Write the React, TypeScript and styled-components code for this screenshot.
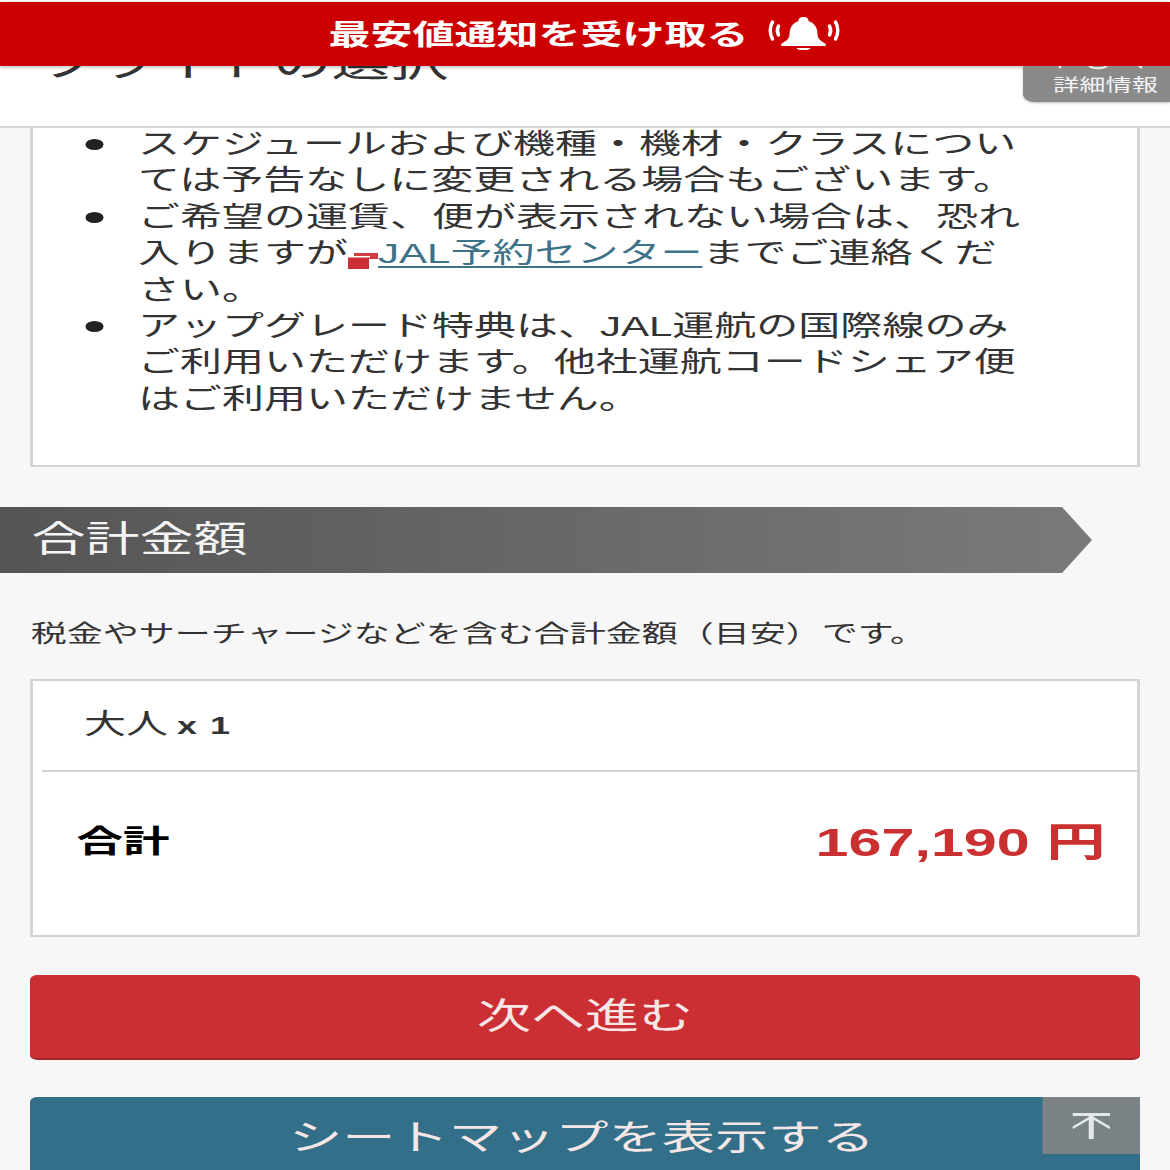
import React from 'react';
import styled, { createGlobalStyle } from 'styled-components';

const GlobalStyle = createGlobalStyle`
  html, body {
    margin: 0;
    background: #f7f7f7;
    overflow: hidden;
  }
`;

// the screenshot is stretched sideways, so the page is laid out at 780 wide and widened
const Stage = styled.div`
  width: 780px;
  height: 1170px;
  overflow: hidden;
  position: relative;
  transform: scaleX(1.5);
  transform-origin: 0 0;
  background: #f7f7f7;
  color: #333;
  font-family: "Liberation Sans", "Noto Sans CJK JP", sans-serif;
`;

const Header = styled.header`
  position: relative;
  z-index: 2;
  box-sizing: border-box;
  height: 128px;
  padding: 38px 0 0 26px;
  background: #fff;
  border-bottom: 2px solid #d4d4d4;
`;

const Title = styled.h1`
  margin: 0;
  font-size: 39px;
  line-height: 50px;
  font-weight: 400;
  color: #333;
`;

const NoticeBar = styled.div`
  position: absolute;
  top: 2px;
  left: 0;
  right: 0;
  height: 64px;
  box-sizing: border-box;
  padding-bottom: 2px;
  display: flex;
  align-items: center;
  justify-content: center;
  gap: 12px;
  background: #cc0000;
  box-shadow: 0 1px 3px rgba(0, 0, 0, 0.3);
  color: #fff;
  font-size: 28px;
  font-weight: 700;
`;

const DetailTab = styled.div`
  position: absolute;
  top: 66px;
  right: 0;
  width: 98px;
  height: 36px;
  display: flex;
  align-items: flex-end;
  justify-content: center;
  box-sizing: border-box;
  padding: 0 0 5px 12px;
  background: #8a8a8a;
  border-bottom-left-radius: 8px;
  box-shadow: 0 1px 2px rgba(0, 0, 0, 0.25);
  color: #f4f4f4;
  font-size: 17.5px;
  line-height: 24px;
`;

const TabIconEdge = styled.svg`
  position: absolute;
  top: 0;
  left: 0;
  width: 98px;
  height: 4px;
`;

const NoticeBox = styled.section`
  box-sizing: border-box;
  height: 340px;
  margin: 0 20.500px 0 20px;
  background: #fff;
  border: 2px solid #d4d4d4;
  border-top: none;
`;

const NoticeList = styled.ul`
  margin: -1px 0 0;
  padding: 0 0 0 70px;
  list-style: none;
  font-size: 28px;
  line-height: 36.4px;
`;

const NoticeItem = styled.li`
  position: relative;

  &::before {
    content: '';
    position: absolute;
    top: 12px;
    left: -35px;
    width: 12px;
    height: 11px;
    border-radius: 50%;
    background: #222;
  }
`;

const TextLink = styled.a`
  color: #3d7289;
  text-decoration: underline;
  text-underline-offset: 3px;
`;

const ExternalIcon = styled.svg`
  display: inline-block;
  width: 20px;
  height: 18px;
  vertical-align: -7px;
`;

const SectionHeading = styled.h2`
  box-sizing: border-box;
  width: 728px;
  height: 66px;
  margin: 40px 0 0;
  padding-left: 21px;
  background: linear-gradient(90deg, #555 0%, #7a7a7a 100%);
  clip-path: polygon(0 0, 708px 0, 100% 50%, 708px 100%, 0 100%);
  color: #f4f4f4;
  font-size: 36px;
  line-height: 66px;
  font-weight: 400;
`;

const Lead = styled.p`
  margin: 43px 0 0 20.500px;
  font-size: 24px;
  line-height: 36px;
`;

const PriceCard = styled.section`
  box-sizing: border-box;
  height: 258px;
  margin: 27px 20px 0 20px;
  background: #fff;
  border: 2px solid #d4d4d4;
`;

const PassengerRow = styled.div`
  box-sizing: border-box;
  height: 91px;
  margin-left: 6px;
  padding: 24px 0 0 28px;
  border-bottom: 2px solid #d4d4d4;
  font-size: 28px;
  line-height: 40px;
`;

const Multiplier = styled.span`
  font-weight: 700;
  margin-left: 6px;
  font-size: 24px;
  word-spacing: 2px;
`;

const TotalRow = styled.div`
  display: flex;
  align-items: center;
  justify-content: space-between;
  padding: 45px 21px 0 29px;
`;

const TotalLabel = styled.span`
  color: #000;
  font-size: 31px;
  line-height: 50px;
  font-weight: 700;
`;

const TotalPrice = styled.span`
  color: #c9302f;
  font-size: 39.5px;
  line-height: 50px;
  font-weight: 700;
`;

const ActionButton = styled.button<{ $tone: 'red' | 'blue' }>`
  display: block;
  box-sizing: border-box;
  width: 740px;
  height: 85px;
  margin: ${(p) => (p.$tone === 'red' ? '38px' : '37px')} 0 0 20px;
  padding: ${(p) => (p.$tone === 'red' ? '0 0 8px' : '0 4px 8px 0')};
  border: none;
  border-bottom: 2px solid ${(p) => (p.$tone === 'red' ? '#a3262a' : '#2b5f75')};
  border-radius: 5px;
  background: ${(p) => (p.$tone === 'red' ? '#cc2f33' : '#336f88')};
  color: #f6e6e6;
  font-family: inherit;
  font-size: ${(p) => (p.$tone === 'red' ? '36px' : '35.500px')};
`;

const BackToTop = styled.div`
  position: absolute;
  top: 1097px;
  left: 695px;
  width: 65px;
  height: 57px;
  display: flex;
  align-items: center;
  justify-content: center;
  background: #7a8286;
`;

const BellIcon = () => (
  <svg width="50" height="34" viewBox="0 0 75 34" preserveAspectRatio="none" fill="none">
    <path d="M37 1c3 0 5 1 5 4 6 2 9 7 9 13 0 4 2 6 7 9 2 1 2 3 0 3H16c-2 0-2-2 0-3 5-3 7-5 7-9 0-6 3-11 9-13 0-3 2-4 5-4z" fill="#fff" />
    <path d="M30 32h14c-1 3-13 3-14 0z" fill="#fff" />
    <path d="M6 6c-3 5-3 12 0 17M69 6c3 5 3 12 0 17" stroke="#fff" strokeWidth="3.500" strokeLinecap="round" />
    <path d="M12 10c-1.500 3-1.500 6 0 9M63 10c1.500 3 1.500 6 0 9" stroke="#fff" strokeWidth="3.500" strokeLinecap="round" />
  </svg>
);

const LinkMark = () => (
  <ExternalIcon viewBox="0 0 30 18" preserveAspectRatio="none" aria-hidden="true">
    <rect x="6" y="1" width="24" height="6" fill="#cf3d42" />
    <rect x="0" y="5" width="21" height="12" fill="#cc2f33" />
    <rect x="0" y="4" width="22" height="1.500" fill="#fff" />
  </ExternalIcon>
);

const ArrowIcon = () => (
  <svg width="25" height="26" viewBox="0 0 37 26" preserveAspectRatio="none" fill="none" stroke="#e2e8ec">
    <path d="M0 1.500h37" strokeWidth="3" />
    <path d="M18.500 26V3" strokeWidth="5" />
    <path d="M0 15L18.500 4 37 15" strokeWidth="2.500" />
  </svg>
);

export default function App() {
  return (
    <Stage>
      <GlobalStyle />
      <Header>
        <Title>フライトの選択</Title>
        <NoticeBar>
          最安値通知を受け取る
          <BellIcon />
        </NoticeBar>
        <DetailTab>
          <TabIconEdge viewBox="0 0 147 4" preserveAspectRatio="none" fill="none" stroke="#f0f0f0" strokeWidth="2">
            <path d="M36 0l2 2M66 0c4 3 14 3 18 0M116 0l3 2" />
          </TabIconEdge>
          詳細情報
        </DetailTab>
      </Header>
      <NoticeBox>
        <NoticeList>
          <NoticeItem>
            スケジュールおよび機種・機材・クラスについ
            <br />
            ては予告なしに変更される場合もございます。
          </NoticeItem>
          <NoticeItem>
            ご希望の運賃、便が表示されない場合は、恐れ
            <br />
            入りますが
            <LinkMark />
            <TextLink href="#">JAL予約センター</TextLink>
            までご連絡くだ
            <br />
            さい。
          </NoticeItem>
          <NoticeItem>
            アップグレード特典は、JAL運航の国際線のみ
            <br />
            ご利用いただけます。他社運航コードシェア便
            <br />
            はご利用いただけません。
          </NoticeItem>
        </NoticeList>
      </NoticeBox>
      <SectionHeading>合計金額</SectionHeading>
      <Lead>税金やサーチャージなどを含む合計金額（目安）です。</Lead>
      <PriceCard>
        <PassengerRow>
          大人
          <Multiplier>x 1</Multiplier>
        </PassengerRow>
        <TotalRow>
          <TotalLabel>合計</TotalLabel>
          <TotalPrice>167,190 円</TotalPrice>
        </TotalRow>
      </PriceCard>
      <ActionButton $tone="red">次へ進む</ActionButton>
      <ActionButton $tone="blue">シートマップを表示する</ActionButton>
      <BackToTop>
        <ArrowIcon />
      </BackToTop>
    </Stage>
  );
}
